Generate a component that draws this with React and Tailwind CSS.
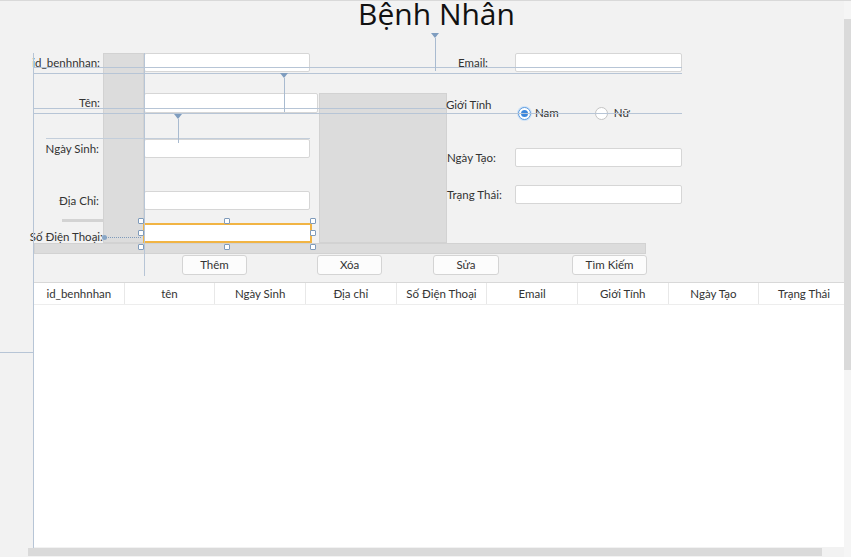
import React from 'react';

const Field = ({ className = '' }) => (
  <div className={`bg-white border border-[#d6d6d6] rounded-[2px] h-full ${className}`} />
);

const Handle = ({ x, y }) => (
  <div
    className="absolute w-[6px] h-[6px] bg-white border border-[#7f9bbb] rounded-[1px]"
    style={{ left: x - 3, top: y - 3 }}
  />
);

const Marker = ({ x, top, height }) => (
  <div className="absolute flex flex-col items-center" style={{ left: x - 4, top }}>
    <div className="w-0 h-0 border-l-4 border-r-4 border-t-[5px] border-l-transparent border-r-transparent border-t-[#7f9dbf]" />
    <div className="w-px bg-[#a9bbd0]" style={{ height }} />
  </div>
);

const columns = [
  'id_benhnhan',
  'tên',
  'Ngày Sinh',
  'Địa chỉ',
  'Số Điện Thoại',
  'Email',
  'Giới Tính',
  'Ngày Tạo',
  'Trạng Thái',
];

export default function App() {
  return (
    <div className="relative w-[851px] h-[557px] overflow-hidden bg-[#f2f2f2] border-t border-[#d9d9d9] font-['Lato','Noto_Sans',sans-serif] text-[11.5px] text-[#333]">
      {/* scene builder grid cells */}
      <div className="absolute left-[103px] top-[52px] w-[41px] h-[190px] bg-[#dcdcdc] border border-[#d2d2d2]" />
      <div className="absolute left-[319px] top-[92px] w-[128px] h-[150px] bg-[#dcdcdc] border border-[#d2d2d2]" />
      <div className="absolute left-[34px] top-[242px] w-[612px] h-[11px] bg-[#dcdcdc] border border-[#d2d2d2]" />
      <div className="absolute left-[62px] top-[218px] w-[42px] h-[3px] bg-[#d3d3d3]" />

      <div className="relative flex h-full">
        <div className="w-[844px] flex flex-col">
          <h1 className="h-[30px] -mt-[2px] mb-[2px] pl-[29px] text-center leading-[30px] text-[30px] text-[#111] font-['Open_Sans',sans-serif]">
            Bệnh Nhân
          </h1>

          <div className="flex">
            {/* left column */}
            <div className="w-[446px] shrink-0 flex flex-col pt-[22px]">
              <div className="flex items-center h-[19px]">
                <span className="w-[100px] text-right">id_benhnhan:</span>
                <Field className="ml-[44px] w-[166px]" />
              </div>
              <div className="flex items-center h-[20px] mt-[21px]">
                <span className="w-[100px] text-right">Tên:</span>
                <Field className="ml-[44px] w-[174px]" />
              </div>
              <div className="flex items-center h-[19px] mt-[26px]">
                <span className="w-[99px] text-right">Ngày Sinh:</span>
                <Field className="ml-[45px] w-[166px]" />
              </div>
              <div className="flex items-center h-[19px] mt-[33px]">
                <span className="w-[99px] text-right">Địa Chỉ:</span>
                <Field className="ml-[45px] w-[166px]" />
              </div>
              <div className="flex items-center h-[20px] mt-[13px]">
                <span className="w-[103px] text-right whitespace-nowrap pt-[8px]">Số Điện Thoại:</span>
                <div className="ml-[40px] w-[169px] h-full bg-white border-2 border-[#f1b444]" />
              </div>
            </div>

            {/* right column */}
            <div className="flex flex-col pt-[22px]">
              <div className="flex items-center h-[19px]">
                <span className="w-[42px] text-right">Email:</span>
                <Field className="ml-[27px] w-[167px]" />
              </div>
              <div className="flex h-[28px] mt-[21px]">
                <span className="w-[72px] mt-[3px]">Giới Tính</span>
                <div className="flex items-center h-[12px] mt-[14px]">
                  <div className="w-[13px] h-[13px] rounded-full border border-[#5b9be0] bg-white flex items-center justify-center shadow-[0_0_0_1px_#cfe2f6]">
                    <div className="w-[7px] h-[7px] rounded-full bg-[#3b86dc]" />
                  </div>
                  <span className="ml-[4px]">Nam</span>
                  <div className="ml-[36px] w-[13px] h-[13px] rounded-full border border-[#c4c4c4] bg-white" />
                  <span className="ml-[6px]">Nữ</span>
                </div>
              </div>
              <div className="flex items-center h-[19px] mt-[27px]">
                <span className="w-[69px] pl-px">Ngày Tạo:</span>
                <Field className="w-[167px]" />
              </div>
              <div className="flex items-center h-[19px] mt-[18px]">
                <span className="w-[69px] pl-px">Trạng Thái:</span>
                <Field className="w-[167px]" />
              </div>
            </div>
          </div>

          <div className="flex h-[20px] mt-[12px] mb-[7px]">
            {[
              ['Thêm', 'ml-[182px] w-[65px]'],
              ['Xóa', 'ml-[70px] w-[65px]'],
              ['Sửa', 'ml-[51px] w-[66px]'],
              ['Tìm Kiếm', 'ml-[73px] w-[75px]'],
            ].map(([label, cls]) => (
              <button
                key={label}
                className={`${cls} h-full bg-[#fcfcfc] border border-[#d4d4d4] rounded-[3px] text-[11.5px] text-[#333]`}
              >
                {label}
              </button>
            ))}
          </div>

          <div className="flex-1 ml-[34px] bg-white border-t border-[#d8d8d8] overflow-hidden">
            <div className="flex w-[816px] h-[22px] border-b border-[#ededed]">
              {columns.map((c) => (
                <div key={c} className="w-[90.67px] shrink-0 flex items-center justify-center border-r border-[#e8e8e8]">
                  {c}
                </div>
              ))}
            </div>
          </div>

          <div className="h-[10px] pt-px">
            <div className="ml-[28px] w-[794px] h-[8px] bg-[#dadada]" />
          </div>
        </div>

        {/* vertical scrollbar */}
        <div className="w-[7px] flex flex-col bg-[#f5f5f5]">
          <div className="h-[18px]" />
          <div className="h-[351px] bg-[#dadada]" />
        </div>
      </div>

      {/* guides */}
      <div className="absolute left-[34px] top-[66px] w-[648px] h-px bg-[#b7c5d6]" />
      <div className="absolute left-[34px] top-[72px] w-[648px] h-px bg-[#b7c5d6]" />
      <div className="absolute left-[34px] top-[107px] w-[412px] h-px bg-[#b7c5d6]" />
      <div className="absolute left-[34px] top-[112px] w-[648px] h-px bg-[#b7c5d6]" />
      <div className="absolute left-[46px] top-[137px] w-[264px] h-px bg-[#c3cedb]" />
      <div className="absolute left-0 top-[351px] w-[33px] h-px bg-[#b7c5d6]" />
      <div className="absolute left-[33px] top-[52px] w-px h-[495px] bg-[#b7c5d6]" />
      <div className="absolute left-[144px] top-[52px] w-px h-[223px] bg-[#b7c5d6]" />

      <Marker x={435} top={32} height={33} />
      <Marker x={284} top={72} height={34} />
      <Marker x={178} top={113} height={24} />

      {/* Số Điện Thoại connector */}
      <div className="absolute left-[102px] top-[234px] w-[5px] h-[5px] rounded-full bg-[#88a6c6]" />
      <div className="absolute left-[106px] top-[236px] w-[35px] border-t border-dotted border-[#7f9bbb]" />

      {/* selection handles */}
      <Handle x={141} y={220} />
      <Handle x={227} y={220} />
      <Handle x={313} y={220} />
      <Handle x={141} y={232} />
      <Handle x={313} y={232} />
      <Handle x={141} y={246} />
      <Handle x={227} y={246} />
      <Handle x={313} y={246} />
    </div>
  );
}
